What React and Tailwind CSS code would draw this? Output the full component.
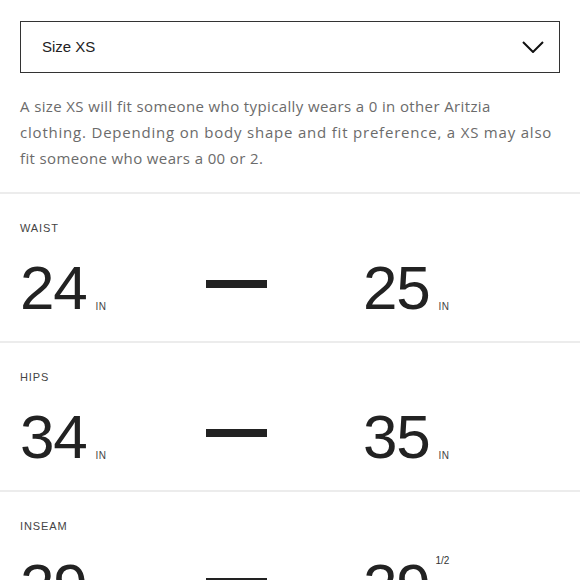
import React from 'react';

const rows = [
    { label: 'WAIST', from: '24', to: '25', fromUnit: 'IN', toUnit: 'IN' },
    { label: 'HIPS', from: '34', to: '35', fromUnit: 'IN', toUnit: 'IN' },
    { label: 'INSEAM', from: '29', to: '29', fromUnit: 'IN', toFraction: '1/2' },
];

function Measure({ value, unit, fraction }) {
    return (
        <div className="flex items-start">
            <span className="text-[62px] leading-none tracking-[-0.02em] text-[#222]">{value}</span>
            {fraction ? (
                <span className="ml-[6px] mt-[1px] text-[10px] leading-none text-[#333]">{fraction}</span>
            ) : (
                <span className="ml-[9px] mt-[45px] text-[10px] leading-none tracking-[0.04em] text-[#444]">{unit}</span>
            )}
        </div>
    );
}

export default function App() {
    return (
        <div className="w-[580px] h-[580px] overflow-hidden bg-white" style={{ fontFamily: '"Liberation Sans", Arial, sans-serif' }}>
            <div className="px-5 pt-[21px]">
                <button className="w-full h-[52px] border-[1.5px] border-[#333] flex items-center justify-between pl-[21px] pr-[15px] text-left">
                    <span className="text-[15px] text-[#222]">Size XS</span>
                    <svg width="22" height="12" viewBox="0 0 22 12" fill="none">
                        <path d="M1 1L11 11L21 1" stroke="#111" strokeWidth="2" />
                    </svg>
                </button>
                <p
                    className="mt-[20px] mb-[21px] text-[15px] leading-[26px] text-[#6b6b6b] whitespace-nowrap"
                    style={{ fontFamily: '"Open Sans", sans-serif' }}
                >
                    <span className="tracking-[0.025em]">A size XS will fit someone who typically wears a 0 in other Aritzia</span><br />
                    <span className="tracking-[0.053em]">clothing. Depending on body shape and fit preference, a XS may also</span><br />
                    <span className="tracking-[0.025em]">fit someone who wears a 00 or 2.</span>
                </p>
            </div>

            {rows.map((r) => (
                <section key={r.label} className="border-t-2 border-[#ececec] px-5 pt-[26px] pb-[22px]">
                    <h3 className="text-[11px] leading-4 tracking-[0.08em] text-[#444]">{r.label}</h3>
                    <div className="mt-[21px] flex items-start">
                        <div className="w-[186px]">
                            <Measure value={r.from} unit={r.fromUnit} />
                        </div>
                        <div className="w-[61px] h-[8px] mt-[23px] bg-[#222]" />
                        <div className="ml-[96px]">
                            <Measure value={r.to} unit={r.toUnit} fraction={r.toFraction} />
                        </div>
                    </div>
                </section>
            ))}
        </div>
    );
}
